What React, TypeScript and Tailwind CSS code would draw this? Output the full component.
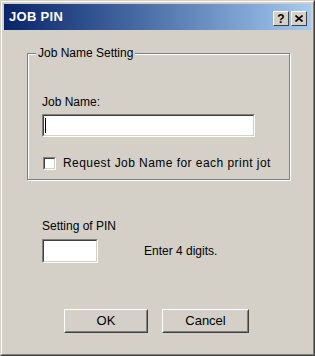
import React from 'react';

const font = { fontFamily: '"Liberation Sans", Arial, sans-serif' };

function Sunken({ className }: { className: string }) {
  return (
    <div
      className={`bg-white border border-t-[#808080] border-l-[#808080] border-r-white border-b-white ${className}`}
    >
      <div className="w-full h-full border border-t-[#404040] border-l-[#404040] border-r-[#d4d0c8] border-b-[#d4d0c8]" />
    </div>
  );
}

function Button({ label, className }: { label: string; className: string }) {
  return (
    <div
      className={`h-[24px] border border-t-white border-l-white border-r-[#404040] border-b-[#404040] ${className}`}
    >
      <div className="w-full h-full flex items-center justify-center border border-t-[#d4d0c8] border-l-[#d4d0c8] border-r-[#808080] border-b-[#808080] text-[13px] text-black">
        {label}
      </div>
    </div>
  );
}

export default function App() {
  return (
    <div
      style={font}
      className="w-[315px] h-[356px] bg-[#d4d0c8] border border-t-[#d4d0c8] border-l-[#d4d0c8] border-r-[#404040] border-b-[#404040]"
    >
      <div className="w-full h-full flex flex-col border border-t-white border-l-white border-r-[#808080] border-b-[#808080] p-[2px]">
        {/* title bar */}
        <div className="h-[26px] flex items-center bg-gradient-to-r from-[#0a246a] to-[#a6caf0] pl-[5px] pr-[4px]">
          <span className="flex-1 text-white font-bold text-[13px] tracking-[0.3px]">JOB PIN</span>
          <div className="flex gap-[2px] mt-[3px]">
            <div className="w-[16px] h-[15px] bg-[#d4d0c8] border border-t-white border-l-white border-r-[#404040] border-b-[#404040] flex items-center justify-center text-[12px] font-bold leading-none text-black">
              ?
            </div>
            <div className="w-[16px] h-[15px] bg-[#d4d0c8] border border-t-white border-l-white border-r-[#404040] border-b-[#404040] flex items-center justify-center">
              <svg width="8" height="7" viewBox="0 0 8 7">
                <path d="M0.5 0.5 L7.5 6.5 M7.5 0.5 L0.5 6.5" stroke="#000" strokeWidth="1.6" />
              </svg>
            </div>
          </div>
        </div>

        {/* body */}
        <div className="flex flex-col pl-[23px] pt-[23px] text-[12px] text-black">
          {/* group box */}
          <div className="relative w-[263px] h-[127px] border border-[#808080] shadow-[inset_1px_1px_0_#fff,1px_1px_0_#fff] pl-[14px] pt-[41px]">
            <span className="absolute -top-[8px] left-[8px] px-[2px] bg-[#d4d0c8] leading-[14px]">
              Job Name Setting
            </span>
            <div className="leading-[14px]">Job Name:</div>
            <div className="relative mt-[5px]">
              <Sunken className="w-[213px] h-[23px]" />
              <div className="absolute left-[3px] top-[4px] w-[1px] h-[15px] bg-black" />
            </div>
            <div className="flex items-center mt-[19px]">
              <Sunken className="w-[13px] h-[13px] ml-[1px]" />
              <span className="ml-[7px] leading-[14px] whitespace-nowrap tracking-[0.45px]">
                Request Job Name for each print jot
              </span>
            </div>
          </div>

          {/* PIN */}
          <div className="mt-[39px] pl-[15px] leading-[14px]">Setting of PIN</div>
          <div className="flex items-center mt-[6px] pl-[15px]">
            <Sunken className="w-[56px] h-[24px]" />
            <span className="ml-[46px] leading-[14px]">Enter 4 digits.</span>
          </div>

          {/* buttons */}
          <div className="flex mt-[46px] pl-[37px] gap-[14px]">
            <Button label="OK" className="w-[84px]" />
            <Button label="Cancel" className="w-[87px]" />
          </div>
        </div>
      </div>
    </div>
  );
}
